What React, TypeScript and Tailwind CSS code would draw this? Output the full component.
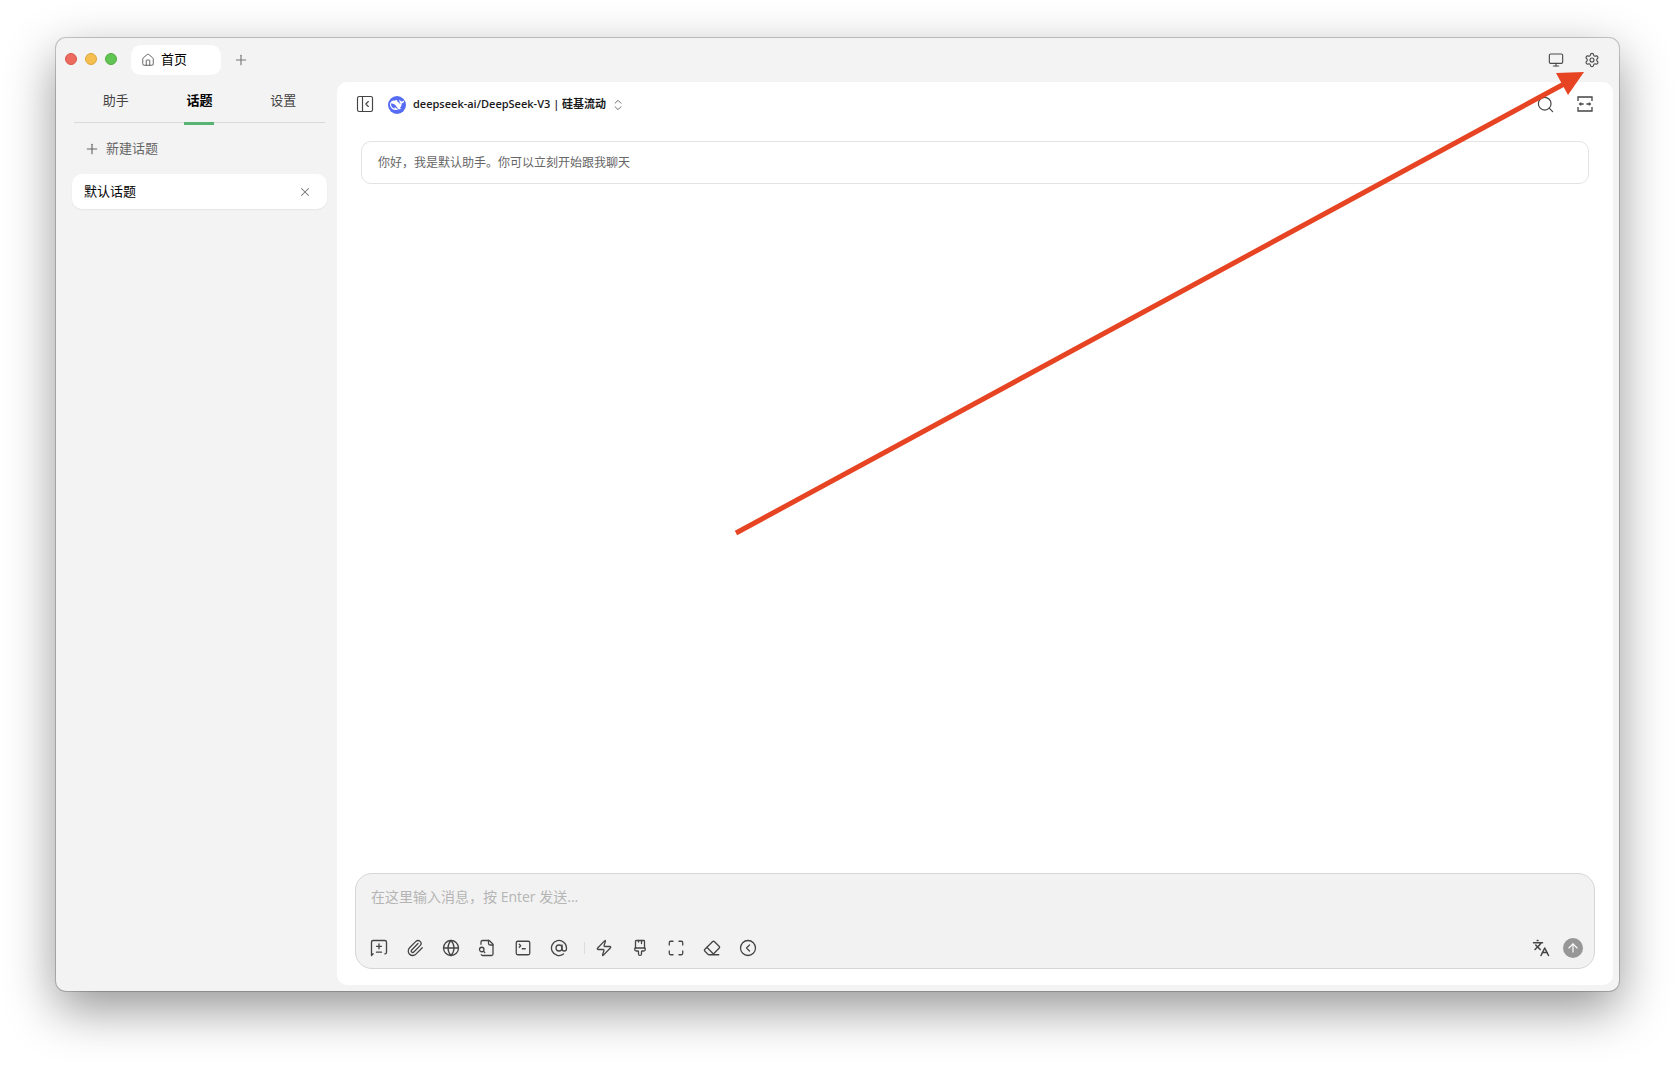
import React, { useState } from "react";
import {
  AtSign,
  ArrowUp,
  ChevronsUpDown,
  CircleChevronLeft,
  Eraser,
  Globe,
  House,
  Languages,
  Maximize,
  Monitor,
  PaintbrushVertical,
  PanelLeftClose,
  Paperclip,
  Plus,
  Search,
  Settings,
  SquareTerminal,
  X,
  Zap,
} from "lucide-react";

type IconProps = { size?: number; strokeWidth?: number };

function Outline({ size = 18, strokeWidth = 2, children }: IconProps & { children: React.ReactNode }) {
  return (
    <svg
      width={size}
      height={size}
      viewBox="0 0 24 24"
      fill="none"
      stroke="currentColor"
      strokeWidth={strokeWidth}
      strokeLinecap="round"
      strokeLinejoin="round"
      aria-hidden="true"
    >
      {children}
    </svg>
  );
}

function NewTopicIcon(props: IconProps) {
  return (
    <Outline {...props}>
      <path d="m5 19-2 2V5c0-1.1.9-2 2-2h14a2 2 0 0 1 2 2v12a2 2 0 0 1-2 2" />
      <path d="M9 10h6" />
      <path d="M12 7v6" />
      <path d="M9 17h6" />
    </Outline>
  );
}

function FileSearchIcon(props: IconProps) {
  return (
    <Outline {...props}>
      <path d="M14 2v4a2 2 0 0 0 2 2h4" />
      <path d="M4.268 21a2 2 0 0 0 1.727 1H18a2 2 0 0 0 2-2V7l-5-5H6a2 2 0 0 0-2 2v3" />
      <path d="m9 18-1.5-1.5" />
      <circle cx="5" cy="14" r="3" />
    </Outline>
  );
}

function NarrowModeIcon() {
  return (
    <svg width="20" height="20" viewBox="0 0 20 20" fill="none" stroke="currentColor" strokeWidth="1.3" aria-hidden="true">
      <path d="M3 7V3h14v4M3 13v4h14v-4" />
      <path d="M5 10h3.6M11.4 10H15" />
      <path d="M3.6 10l2.6-2v4zM16.4 10l-2.6-2v4z" fill="currentColor" stroke="none" />
    </svg>
  );
}

function DeepSeekAvatar() {
  return (
    <span className="flex size-[18px] items-center justify-center rounded-full bg-[#566cf4]">
      <svg width="14" height="14" viewBox="0 0 24 24" fill="#fff" fillRule="evenodd" aria-hidden="true">
        <path d="M23.748 4.482c-.254-.124-.364.113-.512.234-.051.039-.094.09-.137.136-.372.397-.806.657-1.373.626-.829-.046-1.537.214-2.163.848-.133-.782-.575-1.248-1.247-1.548-.352-.156-.708-.311-.955-.65-.172-.241-.219-.51-.305-.774-.055-.16-.11-.323-.293-.35-.2-.031-.278.136-.356.276-.313.572-.434 1.202-.422 1.84.027 1.436.633 2.58 1.838 3.393.137.093.172.187.129.323-.082.28-.18.552-.266.833-.055.179-.137.217-.329.14a5.526 5.526 0 01-1.736-1.18c-.857-.828-1.631-1.742-2.597-2.458a11.365 11.365 0 00-.689-.471c-.985-.957.13-1.743.388-1.836.27-.098.093-.432-.779-.428-.872.004-1.67.295-2.687.684a3.055 3.055 0 01-.465.137 9.597 9.597 0 00-2.883-.102c-1.885.21-3.39 1.102-4.497 2.623C.082 8.606-.231 10.684.152 12.85c.403 2.284 1.569 4.175 3.36 5.653 1.858 1.533 3.997 2.284 6.438 2.14 1.482-.085 3.133-.284 4.994-1.86.47.234.962.327 1.78.397.63.059 1.236-.03 1.705-.128.735-.156.684-.837.419-.961-2.155-1.004-1.682-.595-2.113-.926 1.096-1.296 2.746-2.642 3.392-7.003.05-.347.007-.565 0-.845-.004-.17.035-.237.23-.256a4.173 4.173 0 001.545-.475c1.396-.763 1.96-2.015 2.093-3.517.02-.23-.004-.467-.247-.588zM11.581 18c-2.089-1.642-3.102-2.183-3.52-2.16-.392.024-.321.471-.235.763.09.288.207.486.371.739.114.167.192.416-.113.603-.673.416-1.842-.14-1.897-.167-1.361-.802-2.5-1.86-3.301-3.307-.774-1.393-1.224-2.887-1.298-4.482-.02-.386.093-.522.477-.592a4.696 4.696 0 011.529-.039c2.132.312 3.946 1.265 5.468 2.774.868.86 1.525 1.887 2.202 2.891.72 1.066 1.494 2.082 2.48 2.914.348.292.625.514.891.677-.802.09-2.14.11-3.054-.614z" />
      </svg>
    </span>
  );
}

function IconButton({ label, children }: { label: string; children: React.ReactNode }) {
  return (
    <button type="button" aria-label={label} className="flex size-[30px] shrink-0 items-center justify-center rounded-full">
      {children}
    </button>
  );
}

function TitleBar() {
  return (
    <header className="flex h-11 shrink-0 items-center pr-3 pl-[9px]">
      <div className="flex gap-2 pb-[2px]">
        <button type="button" aria-label="关闭" className="size-3 rounded-full border border-[#d9574b] bg-[#ec6a5e]" />
        <button type="button" aria-label="最小化" className="size-3 rounded-full border border-[#dea63c] bg-[#f4bf4f]" />
        <button type="button" aria-label="缩放" className="size-3 rounded-full border border-[#52ac40] bg-[#61c554]" />
      </div>
      <button type="button" className="ml-[14px] flex h-[30px] w-[90px] items-center gap-[6px] rounded-[10px] bg-white pl-[10px] text-[13px] text-black">
        <House size={14} strokeWidth={1.5} className="text-[#555]" />
        首页
      </button>
      <button type="button" aria-label="新标签页" className="ml-[11px] flex size-[18px] items-center justify-center text-[#777]">
        <Plus size={16} strokeWidth={1.7} />
      </button>
      <div className="ml-auto flex gap-[6px] text-[#4a4a4a]">
        <IconButton label="主题">
          <Monitor size={16} strokeWidth={1.7} />
        </IconButton>
        <IconButton label="设置">
          <Settings size={16} strokeWidth={1.7} />
        </IconButton>
      </div>
    </header>
  );
}

const TABS = ["助手", "话题", "设置"];

function Sidebar() {
  const [active, setActive] = useState("话题");
  return (
    <aside className="flex w-[281px] shrink-0 flex-col pr-[10px] pl-4 text-[13px]">
      <div role="tablist" className="mx-[2px] grid h-[41px] grid-cols-3 border-b border-[#d9d9d9]">
        {TABS.map((tab) => (
          <button
            key={tab}
            type="button"
            role="tab"
            aria-selected={tab === active}
            onClick={() => setActive(tab)}
            className={
              tab === active
                ? "relative pb-[3px] font-bold text-black after:absolute after:-bottom-[3px] after:left-1/2 after:h-[3px] after:w-[30px] after:-translate-x-1/2 after:bg-[#57b373]"
                : "relative pb-[3px] text-[#444]"
            }
          >
            {tab}
          </button>
        ))}
      </div>
      <button type="button" className="mt-2 flex h-9 items-center gap-[6px] pl-3 text-[#666]">
        <Plus size={16} strokeWidth={1.7} />
        新建话题
      </button>
      <div className="mt-[7px] flex h-[35px] items-center justify-between rounded-[10px] bg-white pr-[15px] pl-3 text-black shadow-[0_1px_2px_rgba(0,0,0,0.06)]">
        <button type="button">默认话题</button>
        <button type="button" aria-label="删除话题" className="text-[#777]">
          <X size={14} strokeWidth={1.8} />
        </button>
      </div>
    </aside>
  );
}

function ChatHeader() {
  return (
    <div className="flex h-11 shrink-0 items-center pr-[13px] pl-[13px] text-[#444]">
      <IconButton label="收起侧边栏">
        <PanelLeftClose size={20} strokeWidth={1.4} />
      </IconButton>
      <button type="button" className="ml-2 flex items-center gap-[7px] pt-px font-['Open_Sans','Noto_Sans_CJK_SC',sans-serif] text-[11px] font-semibold text-[#1a1a1a]">
        <DeepSeekAvatar />
        <span>deepseek-ai/DeepSeek-V3 | 硅基流动</span>
        <ChevronsUpDown size={14} strokeWidth={1.6} className="-ml-[2px] text-[#666]" />
      </button>
      <div className="ml-auto flex gap-[10px]">
        <IconButton label="搜索">
          <Search size={19} strokeWidth={1.5} />
        </IconButton>
        <IconButton label="窄屏模式">
          <NarrowModeIcon />
        </IconButton>
      </div>
    </div>
  );
}

function Composer() {
  return (
    <form className="mx-[18px] mb-4 flex h-[96px] shrink-0 flex-col justify-between rounded-[17px] border border-[#d6d6d6] bg-[#f2f2f2] pt-[11px] pb-[5px]">
      <textarea
        aria-label="消息"
        rows={1}
        placeholder="在这里输入消息，按 Enter 发送..."
        className="h-6 resize-none bg-transparent px-[15px] font-['Open_Sans','Noto_Sans_CJK_SC',sans-serif] text-[14px] leading-6 text-[#222] outline-none placeholder:text-[#b5b5b5]"
      />
      <div className="flex items-center pr-[6px] pl-2 text-[#444]">
        <div className="flex gap-[6px]">
          <IconButton label="新话题"><NewTopicIcon size={20} strokeWidth={1.6} /></IconButton>
          <IconButton label="附件"><Paperclip size={18} strokeWidth={1.7} /></IconButton>
          <IconButton label="网络搜索"><Globe size={18} strokeWidth={1.7} /></IconButton>
          <IconButton label="知识库"><FileSearchIcon size={18} strokeWidth={1.7} /></IconButton>
          <IconButton label="工具"><SquareTerminal size={18} strokeWidth={1.7} /></IconButton>
          <IconButton label="提及模型"><AtSign size={18} strokeWidth={1.7} /></IconButton>
        </div>
        <span className="mr-[4px] ml-[10px] h-3 w-px bg-[#dcdcdc]" />
        <div className="flex gap-[6px]">
          <IconButton label="快捷短语"><Zap size={18} strokeWidth={1.7} /></IconButton>
          <IconButton label="清空消息"><PaintbrushVertical size={18} strokeWidth={1.7} /></IconButton>
          <IconButton label="展开"><Maximize size={18} strokeWidth={1.7} /></IconButton>
          <IconButton label="清除上下文"><Eraser size={18} strokeWidth={1.7} /></IconButton>
          <IconButton label="折叠工具栏"><CircleChevronLeft size={18} strokeWidth={1.7} /></IconButton>
        </div>
        <div className="ml-auto flex gap-[2px]">
          <IconButton label="翻译"><Languages size={18} strokeWidth={2} /></IconButton>
          <IconButton label="发送">
            <span className="flex size-5 items-center justify-center rounded-full bg-[#979797] text-white">
              <ArrowUp size={14} strokeWidth={2} />
            </span>
          </IconButton>
        </div>
      </div>
    </form>
  );
}

function PointerArrow() {
  return (
    <svg className="pointer-events-none absolute inset-0 size-full" viewBox="0 0 1675 1065" aria-hidden="true">
      <path d="M736 533 1564 84" stroke="#e64422" strokeWidth="5" />
      <path d="M1584 72 1556 73 1568 95Z" fill="#e64422" />
    </svg>
  );
}

export default function App() {
  return (
    <div className="relative flex h-screen min-h-[480px] bg-white px-14 pt-[38px] pb-[74px] font-['Noto_Sans','Noto_Sans_CJK_SC',sans-serif]">
      <div className="flex min-w-0 flex-1 flex-col rounded-[10px] bg-[#f3f3f3] shadow-[0_0_0_1px_rgba(0,0,0,0.2),0_18px_50px_rgba(0,0,0,0.42)]">
        <TitleBar />
        <div className="flex min-h-0 flex-1 pr-[6px] pb-[6px]">
          <Sidebar />
          <main className="flex min-w-0 flex-1 flex-col rounded-[10px] bg-white">
            <ChatHeader />
            <p className="mx-6 mt-[15px] rounded-[10px] border border-[#e3e3e3] px-4 py-3 text-[12px] leading-[17px] text-[#666]">
              你好，我是默认助手。你可以立刻开始跟我聊天
            </p>
            <div className="flex-1" />
            <Composer />
          </main>
        </div>
      </div>
      <PointerArrow />
    </div>
  );
}
